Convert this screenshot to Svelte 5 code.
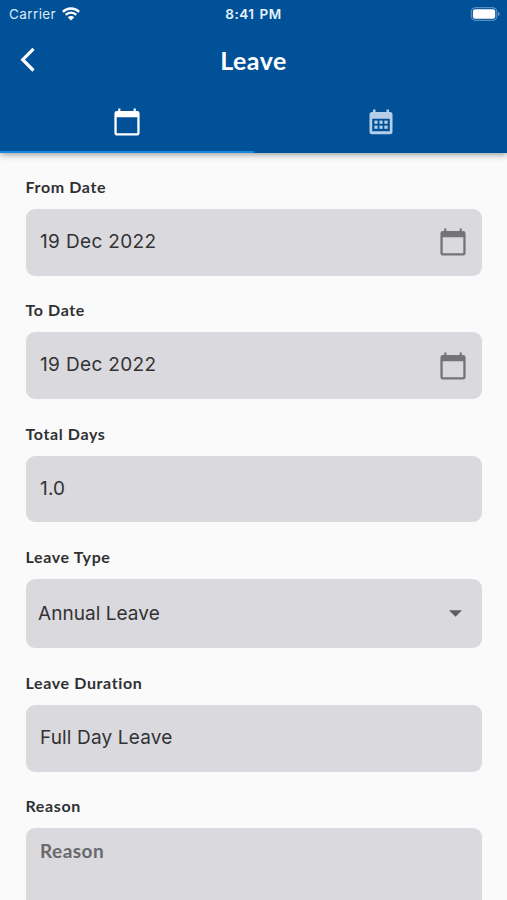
<script>
  const fields = [
    { label: 'From Date', value: '19 Dec 2022', kind: 'date' },
    { label: 'To Date', value: '19 Dec 2022', kind: 'date' },
    { label: 'Total Days', value: '1.0', kind: 'text' },
    { label: 'Leave Type', value: 'Annual Leave', kind: 'select' },
    { label: 'Leave Duration', value: 'Full Day Leave', kind: 'text' },
    { label: 'Reason', value: 'Reason', kind: 'area' }
  ];
</script>

{#snippet calendar()}
  <svg class="calendar" viewBox="0 0 26 28" width="26" height="28">
    <path fill="currentColor" fill-rule="evenodd" d="M4.200 .5h2.200v2.500h13.200V.5h2.200v2.500h1.400A2.400 2.400 0 0 1 25.600 5.400v19.800a2.400 2.400 0 0 1-2.400 2.400H2.800A2.400 2.400 0 0 1 .4 25.200V5.400A2.400 2.400 0 0 1 2.800 3H4.200zM2.700 9.200v16.100h20.600V9.200z" />
  </svg>
{/snippet}

<div class="screen">
  <header>
    <div class="status">
      <div class="carrier">
        <span>Carrier</span>
        <svg viewBox="0 0 18 14" width="18" height="14" fill="none" stroke="#fff" stroke-width="2.3">
          <path d="M.9 4.900a11.400 11.400 0 0 1 16.200 0M3.700 7.900a7.500 7.500 0 0 1 10.600 0" />
          <path fill="#fff" stroke="none" d="M5.700 10.300a4.700 4.700 0 0 1 6.600 0L9 13.600z" />
        </svg>
      </div>
      <span class="time">8:41 PM</span>
      <svg class="battery" viewBox="0 0 30 14" width="30" height="14">
        <rect x="1.300" y=".7" width="25.500" height="12.600" rx="3.800" fill="none" stroke="#6d9dcb" />
        <rect x="2.900" y="2.300" width="22.300" height="9.400" rx="2.200" fill="#fff" />
        <path d="M28.100 4.800c2 .8 2 3.600 0 4.400z" fill="#6d9dcb" />
      </svg>
    </div>
    <div class="title-row">
      <svg viewBox="0 0 16 26" width="16" height="26" fill="none" stroke="#fff" stroke-width="3.200">
        <path d="M13.500 1.900 2.700 12.700l10.800 10.800" />
      </svg>
      <h1>Leave</h1>
    </div>
    <nav>
      <div class="tab active">{@render calendar()}</div>
      <div class="tab">
        <svg viewBox="0 0 24 26" width="24" height="26" fill="#b5cfe9">
          <path fill-rule="evenodd" d="M4 .5h2.500V3h11V.5H20V3h1a2.500 2.500 0 0 1 2.500 2.500v17.300a2.500 2.500 0 0 1-2.500 2.500H3a2.500 2.500 0 0 1-2.500-2.500V5.500A2.500 2.500 0 0 1 3 3h1zM3.200 9.800v12.500h17.600V9.800z" />
          {#each [11.600, 16.600] as y}
            {#each [5.400, 10.400, 15.400] as x}
              <rect {x} {y} width="3.200" height="3.200" />
            {/each}
          {/each}
        </svg>
      </div>
    </nav>
  </header>

  <main>
    {#each fields as f}
      <div class="label">{f.label}</div>
      <div class="box {f.kind}">
        <span>{f.value}</span>
        {#if f.kind === 'date'}
          {@render calendar()}
        {:else if f.kind === 'select'}
          <svg class="arrow" viewBox="0 0 13 7" width="13" height="7"><path d="M0 .3h13L6.500 6.700z" fill="#5e5e61" /></svg>
        {/if}
      </div>
    {/each}
  </main>
</div>

<style>
  :global(body) { margin: 0; overflow: hidden; }
  .screen {
    width: 507px;
    height: 900px;
    overflow: hidden;
    display: flex;
    flex-direction: column;
    background: #fafafa;
    font-family: Inter, "Liberation Sans", sans-serif;
  }
  header {
    flex: none;
    height: 152.500px;
    background: #005198;
    color: #fff;
    box-shadow: 0 1px 7px rgba(0, 0, 0, .45);
    display: flex;
    flex-direction: column;
  }
  .status {
    height: 27px;
    display: grid;
    grid-template-columns: 1fr auto 1fr;
    align-items: center;
    padding: 0 7px 0 9px;
    font-size: 13.500px;
  }
  .carrier { display: flex; align-items: center; gap: 6px; color: #dce9f6; letter-spacing: .4px; }
  .time { font-weight: 600; font-size: 13.500px; letter-spacing: .5px; word-spacing: 1px; color: #e8f2fc; margin: 0 1px 0 -1px; }
  .battery { justify-self: end; }
  .title-row {
    height: 65px;
    display: grid;
    grid-template-columns: 1fr auto 1fr;
    align-items: center;
    padding: 0 20px;
  }
  h1 {
    margin: 0;
    font: 700 25px/30px Lato, sans-serif;
    letter-spacing: .5px;
  }
  nav { flex: 1; display: flex; padding-top: 2px; }
  .tab {
    flex: 1;
    display: flex;
    align-items: center;
    justify-content: center;
    padding-left: 1px;
    border-bottom: 2.500px solid transparent;
  }
  .active { border-color: #1688e4; }
  main { padding: 0 25px 0 25.500px; }
  .label {
    height: 56.800px;
    box-sizing: border-box;
    padding-top: 24.700px;
    font: 700 16px/20px Lato, sans-serif;
    letter-spacing: .62px;
    color: #303033;
  }
  .label:first-child { height: 56.500px; padding-top: 24px; }
  .box {
    height: 66.600px;
    box-sizing: border-box;
    border-radius: 9px;
    background: #dad9de;
    display: flex;
    align-items: center;
    justify-content: space-between;
    padding: 0 16px 0 14.500px;
    color: #323235;
    font-size: 19px;
    line-height: 24px;
    letter-spacing: .15px;
  }
  .box span { margin-top: -1px; }
  .box .calendar { color: #747477; }
  .date { letter-spacing: .35px; }
  .select { height: 69px; padding: 0 20px 0 12.500px; letter-spacing: .05px; }
  .select span { margin-top: 1px; }
  .area {
    height: 130px;
    align-items: flex-start;
    padding-top: 11px;
    font: 700 19px/24px Lato, sans-serif;
    letter-spacing: .45px;
    color: #69696c;
  }
  .area span { margin-top: 0; }
</style>
